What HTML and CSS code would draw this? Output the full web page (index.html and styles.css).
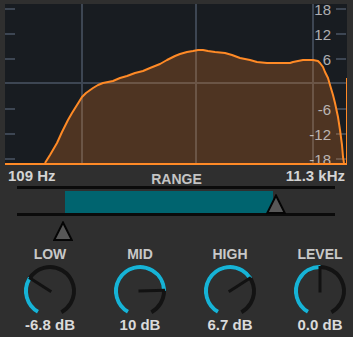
FILE: index.html
```html
<!DOCTYPE html>
<html lang="en">

<head>
    <meta charset="UTF-8">
    <meta name="viewport" content="width=device-width, initial-scale=1.0">
    <title>EQ Range</title>
    <link rel="stylesheet" href="styles.css">
</head>

<body>
    <!-- Spectrum graph -->
    <svg class="graph" width="342" height="161" viewBox="5 4 342 161">
        <defs>
            <clipPath id="under">
                <polygon points="45,163 50,155 57,143 62,132 68,120 72,113 77,105 82,97 86,93 93,88 98,85 103,83 113,81 120,78 127,76 135,73 143,71 150,68 160,64 167,60 175,56 180,54 187,52 193,51 198,50 203,50 208,51 215,52 225,53 232,55 240,58 250,60 257,62 267,63 290,63 293,62 303,60 313,60 318,61 320,63 323,67 325,72 328,78 330,85 333,95 335,103 338,117 340,130 342,145 343,157 344,163 344,165 45,165" />
            </clipPath>
            <g id="grid">
                <rect x="81" y="4" width="2" height="159" />
                <rect x="195" y="4" width="2" height="159" />
                <rect x="312" y="4" width="2" height="159" />
                <rect x="5" y="82" width="342" height="2" />
                <rect x="5" y="8" width="10" height="2" />
                <rect x="5" y="33" width="10" height="2" />
                <rect x="5" y="58" width="10" height="2" />
                <rect x="5" y="108" width="10" height="2" />
                <rect x="5" y="133" width="10" height="2" />
                <rect x="5" y="158" width="10" height="2" />
                <rect x="336" y="8" width="10" height="2" />
                <rect x="336" y="33" width="10" height="2" />
                <rect x="336" y="58" width="10" height="2" />
                <rect x="336" y="108" width="10" height="2" />
                <rect x="336" y="133" width="10" height="2" />
                <rect x="336" y="158" width="10" height="2" />
            </g>
        </defs>
        <rect x="5" y="4" width="342" height="161" class="graph-bg" />
        <use href="#grid" class="grid-dark" />
        <polygon class="area" points="45,163 50,155 57,143 62,132 68,120 72,113 77,105 82,97 86,93 93,88 98,85 103,83 113,81 120,78 127,76 135,73 143,71 150,68 160,64 167,60 175,56 180,54 187,52 193,51 198,50 203,50 208,51 215,52 225,53 232,55 240,58 250,60 257,62 267,63 290,63 293,62 303,60 313,60 318,61 320,63 323,67 325,72 328,78 330,85 333,95 335,103 338,117 340,130 342,145 343,157 344,163" />
        <use href="#grid" class="grid-light" clip-path="url(#under)" />
        <polyline class="curve" points="45,163 50,155 57,143 62,132 68,120 72,113 77,105 82,97 86,93 93,88 98,85 103,83 113,81 120,78 127,76 135,73 143,71 150,68 160,64 167,60 175,56 180,54 187,52 193,51 198,50 203,50 208,51 215,52 225,53 232,55 240,58 250,60 257,62 267,63 290,63 293,62 303,60 313,60 318,61 320,63 323,67 325,72 328,78 330,85 333,95 335,103 338,117 340,130 342,145 343,157 344,163" />

        <text x="331" y="15" class="db">18</text>
        <text x="331" y="40" class="db">12</text>
        <text x="331" y="65" class="db">6</text>
        <text x="331" y="115" class="db">-6</text>
        <text x="331" y="140" class="db">-12</text>
        <text x="331" y="165" class="db">-18</text>

        <rect x="5" y="163" width="342" height="2" class="baseline" />
        <rect x="346" y="78" width="1" height="85" class="baseline" />
    </svg>

    <!-- Frequency range -->
    <div class="freq-row">
        <span class="freq-lo">109 Hz</span>
        <span class="range-title">RANGE</span>
        <span class="freq-hi">11.3 kHz</span>
    </div>

    <div class="range">
        <div class="range-fill" style="margin-left: 48px; width: 208px;"></div>
        <svg class="handle" style="left: 249px; top: 5px;" width="20" height="20" viewBox="0 0 20 20">
            <polygon points="10,1.5 18.8,19 1.2,19" />
        </svg>
        <svg class="handle" style="left: 36px; top: 32px;" width="20" height="20" viewBox="0 0 20 20">
            <polygon points="10,1.5 18.8,19 1.2,19" />
        </svg>
    </div>

    <!-- Knobs -->
    <div class="knobs">
        <div class="knob">
            <div class="knob-label">LOW</div>
            <svg width="60" height="54" viewBox="0 0 60 54">
                <circle cx="30" cy="28" r="24" class="track" transform="rotate(120 30 28)" />
                <circle cx="30" cy="28" r="24" class="value" stroke-dasharray="38.96 200" transform="rotate(120 30 28)" />
                <line x1="30" y1="29.5" x2="30" y2="3" class="pointer" transform="rotate(-57 30 28)" />
            </svg>
            <div class="knob-value">-6.8 dB</div>
        </div>
        <div class="knob">
            <div class="knob-label">MID</div>
            <svg width="60" height="54" viewBox="0 0 60 54">
                <circle cx="30" cy="28" r="24" class="track" transform="rotate(120 30 28)" />
                <circle cx="30" cy="28" r="24" class="value" stroke-dasharray="99.7 200" transform="rotate(120 30 28)" />
                <line x1="30" y1="29.5" x2="30" y2="3" class="pointer" transform="rotate(88 30 28)" />
            </svg>
            <div class="knob-value">10 dB</div>
        </div>
        <div class="knob">
            <div class="knob-label">HIGH</div>
            <svg width="60" height="54" viewBox="0 0 60 54">
                <circle cx="30" cy="28" r="24" class="track" transform="rotate(120 30 28)" />
                <circle cx="30" cy="28" r="24" class="value" stroke-dasharray="86.7 200" transform="rotate(120 30 28)" />
                <line x1="30" y1="29.5" x2="30" y2="3" class="pointer" transform="rotate(57 30 28)" />
            </svg>
            <div class="knob-value">6.7 dB</div>
        </div>
        <div class="knob">
            <div class="knob-label">LEVEL</div>
            <svg width="60" height="54" viewBox="0 0 60 54">
                <circle cx="30" cy="28" r="24" class="track" transform="rotate(120 30 28)" />
                <circle cx="30" cy="28" r="24" class="value" stroke-dasharray="62.83 200" transform="rotate(120 30 28)" />
                <line x1="30" y1="29.5" x2="30" y2="3" class="pointer" />
            </svg>
            <div class="knob-value">0.0 dB</div>
        </div>
    </div>
</body>

</html>
```

FILE: styles.css
```css
body {
    font-family: "Liberation Sans", Arial, sans-serif;
    margin: 0;
    padding: 4px 0 0 0;
    background-color: #2f2f2f;
    color: #d4d4d4;
    overflow: hidden;
}

.graph {
    display: block;
    margin-left: 5px;
    overflow: visible;
}

.graph-bg {
    fill: #181c21;
}

.grid-dark {
    fill: #3d4653;
}

.grid-light {
    fill: #6b5546;
}

.area {
    fill: #4e3422;
}

.curve {
    fill: none;
    stroke: #ff8a26;
    stroke-width: 2;
    stroke-linejoin: round;
}

.baseline {
    fill: #ff8a26;
}

.db {
    font-size: 15px;
    text-anchor: end;
    fill: rgba(225, 225, 228, 0.75);
}

.freq-row {
    display: grid;
    grid-template-columns: 1fr auto 1fr;
    height: 18px;
    margin-top: 2px;
    padding: 0 8px;
    font-size: 15px;
    font-weight: bold;
    line-height: 18px;
}

.freq-hi {
    text-align: right;
}

.range-title {
    padding-top: 3px;
    font-size: 14px;
    color: #c4c4c4;
}

.range {
    position: relative;
    margin: 1px 18px 0 17px;
    padding-top: 2px;
    border-top: 3px solid #0b0b0b;
    border-bottom: 3px solid #0b0b0b;
}

.range-fill {
    height: 22px;
    background-color: #00646f;
}

.handle {
    position: absolute;
}

.handle polygon {
    fill: #575757;
    stroke: #050505;
    stroke-width: 2;
    stroke-linejoin: miter;
}

.knobs {
    display: grid;
    grid-template-columns: repeat(4, 60px);
    column-gap: 30px;
    margin-top: 30px;
    padding-left: 20px;
}

.knob {
    text-align: center;
}

.knob svg {
    display: block;
    margin-top: 1px;
}

.knob-label {
    font-size: 14px;
    font-weight: bold;
    line-height: 16px;
    color: #c8c8c8;
}

.knob-value {
    font-size: 15px;
    font-weight: bold;
    line-height: 16px;
    white-space: nowrap;
    color: #dadada;
}

.track {
    fill: none;
    stroke: #131313;
    stroke-width: 4;
    stroke-dasharray: 125.66 200;
}

.value {
    fill: none;
    stroke: #17b3d6;
    stroke-width: 4;
}

.pointer {
    stroke: #121212;
    stroke-width: 3;
}
```
